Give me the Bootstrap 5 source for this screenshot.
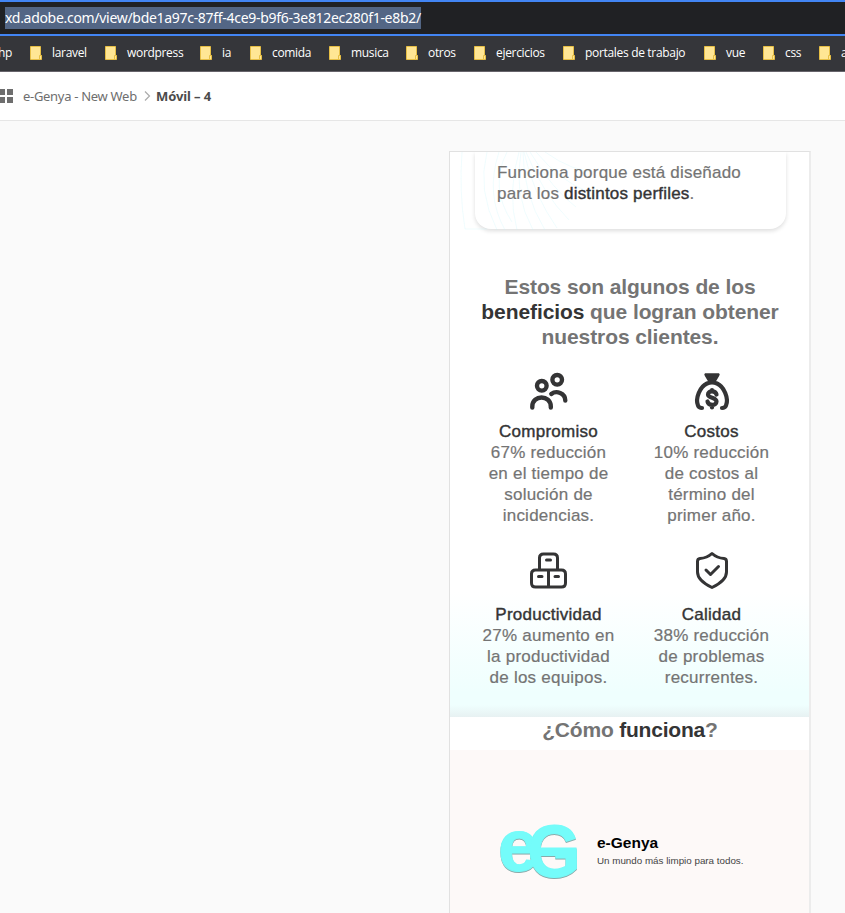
<!DOCTYPE html>
<html lang="es">
<head>
<meta charset="utf-8">
<meta name="viewport" content="width=device-width, initial-scale=1">
<title>e-Genya - New Web</title>
<link href="https://cdn.jsdelivr.net/npm/bootstrap@5.3.0/dist/css/bootstrap.min.css" rel="stylesheet">
<style>
body{font-family:"Open Sans","Noto Sans",sans-serif;background:#fafafa;height:913px;overflow:hidden}
.address{height:36px;background:#202124;border-top:2px solid #4285f4;border-bottom:2px solid #4285f4;padding-left:5px}
.address span{font:14px/22px "Noto Sans",sans-serif;letter-spacing:-.3px;height:22px;width:416px;background:#536685;color:#fff;white-space:nowrap}
.bookmarks{height:36px;padding-bottom:2px;background:#35363a;border-bottom:1px solid #67646b;color:#fff;font:12px/16px "Open Sans",sans-serif;letter-spacing:-.32px;white-space:nowrap;overflow:hidden}
.bookmarks a{color:#fff;text-decoration:none;flex:none;display:flex;align-items:center}
.bookmarks svg{width:12px;height:14px;margin-right:10px;flex:none;margin-top:1px}
.cut-left{margin-left:-2px}
.w30{width:30px}.w50{width:50px}.w56{width:56px}.w59{width:59px}.w68{width:68px}.w75{width:75px}.w77{width:77px}.w79{width:79px}.w89{width:89px}.w95{width:95px}.w141{width:141px}
.crumbs{height:49px;background:#fff;border-bottom:1px solid #e6e6e6;font:13px/18px "Noto Sans",sans-serif;color:#6e6e6e;white-space:nowrap}
.crumbs b{color:#4b4b4b;letter-spacing:-.1px}
.crumb-a{width:114px;margin:0 7px 0 2px;letter-spacing:-.3px}
.crumb-sep{margin-right:5px}
.artboard{width:362px;height:762px;margin:30px 0 0 449px;border:1px solid #e1e1e1;border-right-width:2px;border-right-color:#ececec;border-bottom:0;background:#fff;font-family:"Liberation Sans",Arial,sans-serif;color:#747474;overflow:hidden}
.upper{height:565px;background:linear-gradient(#fff 0 440px,#effffe 540px 553px,#e7f1f2 565px)}
.profile{width:311px;height:77px;margin-left:25px;padding:10px 22px;border-radius:0 0 16px 16px;background:#fff;box-shadow:0 2px 4px #0002;font-size:17px;line-height:21px;letter-spacing:.2px;-webkit-text-stroke:.2px #747474;white-space:nowrap;position:relative}
.rays{position:absolute;left:-18px;top:0;width:190px;height:79px}
.profile p{position:relative}
.dark,.benefit strong{color:#343435;font-weight:400;-webkit-text-stroke:.4px #343435}
h2 .dark{font-weight:700;-webkit-text-stroke:0}
h2{font-size:21px;line-height:25px;font-weight:700;letter-spacing:-.09px;white-space:nowrap;margin:0}
.lead-title{margin-top:45px;height:75px;padding-left:1px}
.benefits{padding:21px 16px 0 17px;font-size:17px;line-height:21px;letter-spacing:.23px;-webkit-text-stroke:.2px #747474;text-align:center;white-space:nowrap}
.benefit{width:163px}
.benefit.one{height:179px}
.benefit svg{display:block;width:44px;height:44px;margin:0 auto 7px}
.benefit.two svg{margin-bottom:11px}
.benefit strong{display:block;letter-spacing:.25px}
.benefit svg,.brand svg{overflow:visible}
.how{height:33px}
.how h2{letter-spacing:-.2px;padding-left:1px}
.brand{height:165px;padding-top:70px;background:#fdf9f8}
.brand-copy{margin-top:14px}
.brand h3{font-size:15.5px;line-height:18px;font-weight:700;color:#000;margin:0 0 2px}
.brand p{font-size:9.8px;line-height:13px;color:#444;margin:0;white-space:nowrap}
.logo{width:80px;height:62px;margin-left:50px;margin-right:17px}
.logo g{filter:drop-shadow(0 1px .5px #8aa)}
</style>
<script src="https://cdn.jsdelivr.net/npm/bootstrap@5.3.0/dist/js/bootstrap.bundle.min.js"></script>
</head>
<body>
<svg width="0" height="0" class="d-none"><symbol id="folder" viewBox="0 0 12 14"><path d="M.5.5h10v9h1v4H.5z" fill="#ffe694" stroke="#e7bf45"/><path d="M9.5 13V9.5h2" fill="none" stroke="#e7bf45"/></symbol></svg>
<header>
<div class="address d-flex align-items-center"><span>xd.adobe.com/view/bde1a97c-87ff-4ce9-b9f6-3e812ec280f1-e8b2/</span></div>
<nav class="bookmarks d-flex align-items-center">
<a class="w30" href="#"><span class="cut-left">hp</span></a>
<a class="w75" href="#"><svg><use href="#folder"/></svg>laravel</a>
<a class="w95" href="#"><svg><use href="#folder"/></svg>wordpress</a>
<a class="w50" href="#"><svg><use href="#folder"/></svg>ia</a>
<a class="w79" href="#"><svg><use href="#folder"/></svg>comida</a>
<a class="w77" href="#"><svg><use href="#folder"/></svg>musica</a>
<a class="w68" href="#"><svg><use href="#folder"/></svg>otros</a>
<a class="w89" href="#"><svg><use href="#folder"/></svg>ejercicios</a>
<a class="w141" href="#"><svg><use href="#folder"/></svg>portales de trabajo</a>
<a class="w59" href="#"><svg><use href="#folder"/></svg>vue</a>
<a class="w56" href="#"><svg><use href="#folder"/></svg>css</a>
<a class="w30" href="#"><svg><use href="#folder"/></svg>a</a>
</nav>
<div class="crumbs d-flex align-items-center">
<svg width="13" height="16" class="me-2"><path fill="#6e6e6e" d="M0 1h5v6H0zM7 1h6v6H7zM0 9h5v6H0zM7 9h6v6H7z"/></svg>
<span class="crumb-a">e-Genya - New Web</span>
<svg width="7" height="10" class="crumb-sep"><path d="M1 .5 5.5 5 1 9.5" fill="none" stroke="#aaa" stroke-width="1.2"/></svg>
<b>Móvil – 4</b>
</div>
</header>
<main class="artboard">
<section class="upper">
<div class="profile">
<svg class="rays" viewBox="0 0 190 79" fill="none" stroke="#bff4fa" stroke-width=".6" opacity=".4"><path d="M5 0Q2 40 8 77H30M62 0Q50 40 60 78M64 0Q56 42 76 78M66 0Q66 42 88 78M67 0Q76 42 100 76M69 0Q86 42 112 68M73 0Q96 38 119 55M79 0Q104 30 132 40M88 0Q116 20 140 20M50 0Q32 35 55 70M42 0Q28 42 48 78M30 0Q20 38 40 78"/></svg>
<p class="mb-0">Funciona porque está diseñado<br>para los <span class="dark">distintos perfiles</span>.</p>
</div>
<h2 class="lead-title text-center">Estos son algunos de los<br><span class="dark">beneficios</span> que logran obtener<br>nuestros clientes.</h2>
<div class="benefits d-flex flex-wrap">
<div class="benefit one">
<svg viewBox="0 0 44 44" fill="none" stroke="#343435" stroke-width="4.4" stroke-linecap="round"><circle cx="14.800" cy="15.800" r="4.800"/><circle cx="30.200" cy="9.800" r="4.800"/><path d="M5.300 37.500v-1c0-12 18.500-12 18.500 0v1M24.300 24c5-4 14-1 14 6.500"/></svg>
<strong>Compromiso</strong>67% reducción<br>en el tiempo de<br>solución de<br>incidencias.</div>
<div class="benefit one">
<svg viewBox="0 0 44 44"><path d="M15 3.300h14q1.500 1 0 3l-3 5h-8l-3-5q-1.500-2 0-3z" fill="#343435"/><path d="M17 13.500c-7 3-12 15-9 22q1 2.500 4 2.500M27 13.500c7 3 12 15 9 22q-1 2.500-4 2.500M17 13.500q5-2 10 0" fill="none" stroke="#343435" stroke-width="4.200" stroke-linecap="round"/><path d="M26.500 24.500c-1-4.500-8.500-4-8.500 0s8.500 2.700 8.500 7-8 4.500-9 0M22 20v1M22 35.500v2" fill="none" stroke="#343435" stroke-width="4.200" stroke-linecap="round"/></svg>
<strong>Costos</strong>10% reducción<br>de costos al<br>término del<br>primer año.</div>
<div class="benefit two">
<svg viewBox="0 0 44 44" fill="none" stroke="#343435" stroke-width="3" stroke-linecap="round"><path d="M12.500 21V9q0-4 4-4h10q4 0 4 4v12M8.500 21h26q4 0 4 4v9q0 4-4 4h-26q-4 0-4-4v-9q0-4 4-4zM21.500 21v17M19.500 11h4M11.500 27.500H15M28 27.500h3.500"/></svg>
<strong>Productividad</strong>27% aumento en<br>la productividad<br>de los equipos.</div>
<div class="benefit two">
<svg viewBox="0 0 44 44" fill="none" stroke="#343435" stroke-width="3" stroke-linecap="round" stroke-linejoin="round"><path d="M22 4.500q5 4.500 12 5 2.500.3 2.500 3V23c0 6-5 11-14.500 15.500C12.500 34 7.500 29 7.500 23V12.500q0-2.700 2.500-3 7-.5 12-5zM16 21l4.500 4.500 8-8"/></svg>
<strong>Calidad</strong>38% reducción<br>de problemas<br>recurrentes.</div>
</div>
</section>
<section class="how text-center"><h2>¿Cómo <span class="dark">funciona</span>?</h2></section>
<section class="brand d-flex align-items-start">
<svg class="logo" viewBox="0 0 80 62"><g font-family="Liberation Sans, Arial, sans-serif" font-weight="700" font-size="74" fill="#74fcfa" stroke="#74fcfa"><text x="-2" y="51">e</text><text x="27.500" y="57" textLength="53" lengthAdjust="spacingAndGlyphs">G</text><path d="M37 27.500h39.500V49l-11 4V36H37z" stroke="none"/></g></svg>
<div class="brand-copy"><h3>e-Genya</h3><p>Un mundo más limpio para todos.</p></div>
</section>
</main>
</body>
</html>
